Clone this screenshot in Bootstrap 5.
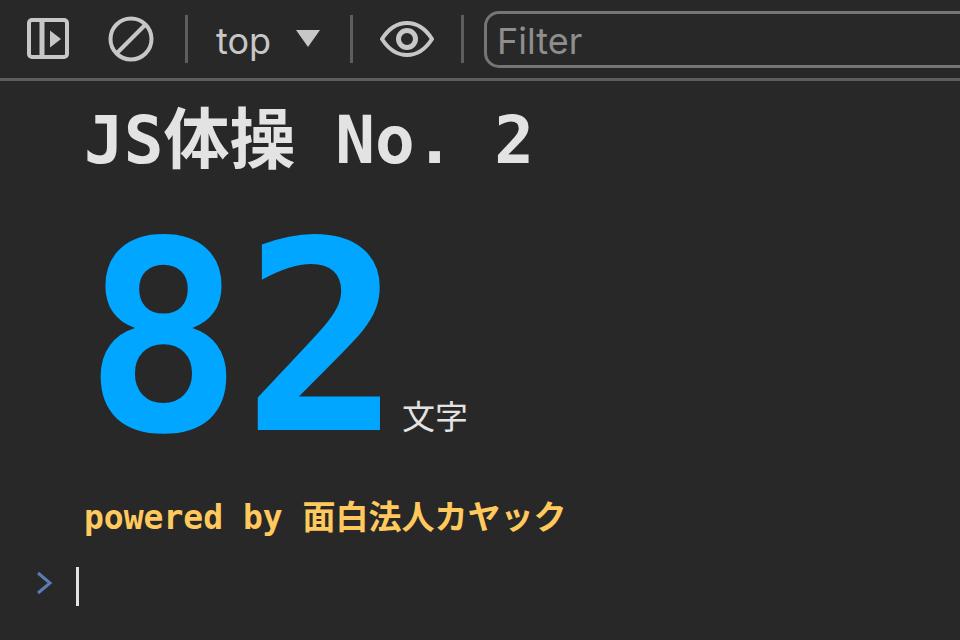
<!DOCTYPE html>
<html lang="ja">
<head>
<meta charset="utf-8">
<title>Console</title>
<link href="https://cdn.jsdelivr.net/npm/bootstrap@5.3.0/dist/css/bootstrap.min.css" rel="stylesheet">
<style>
html,body{height:100%;overflow:hidden;background:#282828}
body{font-family:"DejaVu Sans Mono","Noto Sans CJK JP",monospace;color:#e3e3e3}
.dt-toolbar{height:81px;border-bottom:3px solid #5e5e5e;padding-left:26px;font-family:Inter,"Liberation Sans",sans-serif;overflow:hidden}
.dt-toolbar>*{flex:none}
.dt-sep{width:3px;height:48px;background:#5e5e5e}
.dt-top{font-size:36px;line-height:1;color:#c7c7c7;font-family:Inter,sans-serif;padding-top:3px}
.dt-filter{width:600px;height:57px;border:3px solid #757575;border-radius:15px;color:#8e8e8e;font-size:36px;line-height:55px;padding-left:10px;font-family:Inter,sans-serif}
.dt-log{padding-left:84px}
.dt-title{font-size:66px;line-height:1;font-weight:700;color:#e3e3e3;padding-top:27px;white-space:pre}
.dt-num{font-size:264px;line-height:1;font-weight:700;color:#00a6ff;height:297px;display:flex;align-items:flex-end}
.dt-unit{font-family:"Noto Sans CJK JP",sans-serif;font-size:33px;font-weight:400;line-height:1;color:#e3e3e3;margin-left:0;padding-bottom:39px}
.dt-power{font-size:33px;line-height:1;font-weight:700;color:#ffc95e;white-space:pre;margin-top:30px}
.dt-prompt{height:40px;padding-left:36px;margin-top:32px}
.dt-chev{margin-top:-6px}
.dt-caret{width:3px;height:39px;background:#e3e3e3;margin-left:23px}
</style>
</head>
<body>
<div class="dt-toolbar d-flex align-items-center">
  <svg width="44" height="44" viewBox="0 0 44 44" fill="none"><rect x="3" y="3" width="38" height="37" rx="3" stroke="#c7c7c7" stroke-width="4"/><path d="M16 3v37" stroke="#c7c7c7" stroke-width="5"/><path d="M24 13.500l11 8.500-11 8.500z" fill="#c7c7c7"/></svg>
  <svg width="46" height="46" viewBox="0 0 46 46" fill="none" style="margin-left:38px"><circle cx="23" cy="23" r="20.500" stroke="#c7c7c7" stroke-width="4"/><path d="M9 37 37 9" stroke="#c7c7c7" stroke-width="4"/></svg>
  <div class="dt-sep" style="margin-left:31px"></div>
  <div class="dt-top" style="margin-left:28px">top</div>
  <svg width="24" height="18" viewBox="0 0 24 18" style="margin-left:25px"><path d="M0 0h24L12 17z" fill="#c7c7c7"/></svg>
  <div class="dt-sep" style="margin-left:30px"></div>
  <svg width="54" height="36" viewBox="0 0 54 36" fill="none" style="margin-left:27px"><path d="M2 18C9 7 17 2 27 2s18 5 25 16c-7 11-15 16-25 16S9 29 2 18z" stroke="#c7c7c7" stroke-width="4"/><circle cx="27" cy="18" r="8.500" stroke="#c7c7c7" stroke-width="5"/></svg>
  <div class="dt-sep" style="margin-left:27px"></div>
  <div class="dt-filter" style="margin-left:20px">Filter</div>
</div>
<div class="dt-log">
  <div class="dt-title">JS体操 No. 2</div>
  <div class="dt-num"><span>82</span><span class="dt-unit">文字</span></div>
  <div class="dt-power">powered by 面白法人カヤック</div>
</div>
<div class="dt-prompt d-flex align-items-center">
  <svg class="dt-chev" width="17" height="24" viewBox="0 0 17 24" fill="none"><path d="M2 2l12 10L2 22" stroke="#5a7cb5" stroke-width="3"/></svg>
  <div class="dt-caret"></div>
</div>
<script src="https://cdn.jsdelivr.net/npm/bootstrap@5.3.0/dist/js/bootstrap.bundle.min.js"></script>
</body>
</html>
